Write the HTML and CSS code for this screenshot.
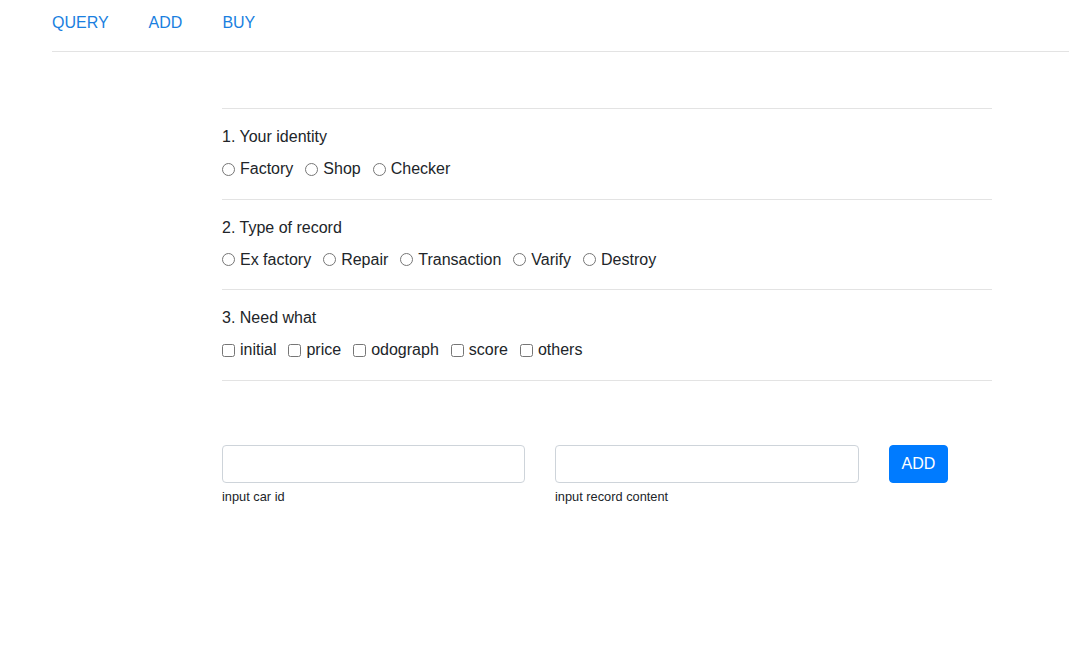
FILE: index.html
```html
<!DOCTYPE html>
<html lang="en">
<head>
<meta charset="utf-8">
<title>Car records</title>
<link rel="stylesheet" href="styles.css">
</head>
<body>
<nav class="nav">
  <a class="nav-link" href="#">QUERY</a>
  <a class="nav-link" href="#">ADD</a>
  <a class="nav-link" href="#">BUY</a>
</nav>
<main class="main">
  <form class="form">
    <section class="group">
      <div class="group-title">1. Your identity</div>
      <div class="options">
        <label class="opt"><input type="radio" name="identity">Factory</label>
        <label class="opt"><input type="radio" name="identity">Shop</label>
        <label class="opt"><input type="radio" name="identity">Checker</label>
      </div>
    </section>
    <section class="group">
      <div class="group-title">2. Type of record</div>
      <div class="options">
        <label class="opt"><input type="radio" name="type">Ex factory</label>
        <label class="opt"><input type="radio" name="type">Repair</label>
        <label class="opt"><input type="radio" name="type">Transaction</label>
        <label class="opt"><input type="radio" name="type">Varify</label>
        <label class="opt"><input type="radio" name="type">Destroy</label>
      </div>
    </section>
    <section class="group group-last">
      <div class="group-title">3. Need what</div>
      <div class="options">
        <label class="opt"><input type="checkbox">initial</label>
        <label class="opt"><input type="checkbox">price</label>
        <label class="opt"><input type="checkbox">odograph</label>
        <label class="opt"><input type="checkbox">score</label>
        <label class="opt"><input type="checkbox">others</label>
      </div>
    </section>
    <div class="inputs">
      <div class="field field-id">
        <input class="text-input" type="text">
        <small class="hint">input car id</small>
      </div>
      <div class="field field-content">
        <input class="text-input" type="text">
        <small class="hint">input record content</small>
      </div>
      <button class="btn" type="button">ADD</button>
    </div>
  </form>
</main>
</body>
</html>
```

FILE: styles.css
```css
* { box-sizing: border-box; }
html, body { margin: 0; padding: 0; background: #fff; }
body {
  font-family: "Liberation Sans", Arial, sans-serif;
  font-size: 16px;
  line-height: 24px;
  color: #212529;
}
.nav {
  display: flex;
  gap: 40px;
  margin-left: 52px;
  padding: 11px 0 16px;
  border-bottom: 1px solid #e3e3e3;
}
.nav-link {
  color: #1a7fe0;
  text-decoration: none;
}
.main {
  padding: 56px 0 0 222px;
}
.form {
  width: 770px;
}
.group {
  border-top: 1px solid #e3e3e3;
  padding: 16px 0 17.7px;
}
.group-last {
  border-bottom: 1px solid #e3e3e3;
}
.group-title {
  margin-bottom: 8px;
}
.options {
  display: flex;
}
.opt {
  display: inline-flex;
  align-items: center;
  margin-right: 12px;
}
.opt input {
  margin: 0 5px 0 0;
  width: 13px;
  height: 13px;
}
.inputs {
  display: flex;
  align-items: flex-start;
  gap: 30px;
  margin-top: 64px;
}
.field {
  display: flex;
  flex-direction: column;
}
.field-id { width: 303px; }
.field-content { width: 304px; }
.text-input {
  height: 38px;
  width: 100%;
  border: 1px solid #ced4da;
  border-radius: 4px;
  padding: 6px 12px;
  font: inherit;
}
.hint {
  font-size: 12.8px;
  line-height: 19.2px;
  margin-top: 4px;
}
.btn {
  width: 59px;
  height: 38px;
  padding: 6px 0;
  border: 1px solid #007bff;
  background: #007bff;
  color: #fff;
  border-radius: 4px;
  font: inherit;
  cursor: pointer;
}
```
